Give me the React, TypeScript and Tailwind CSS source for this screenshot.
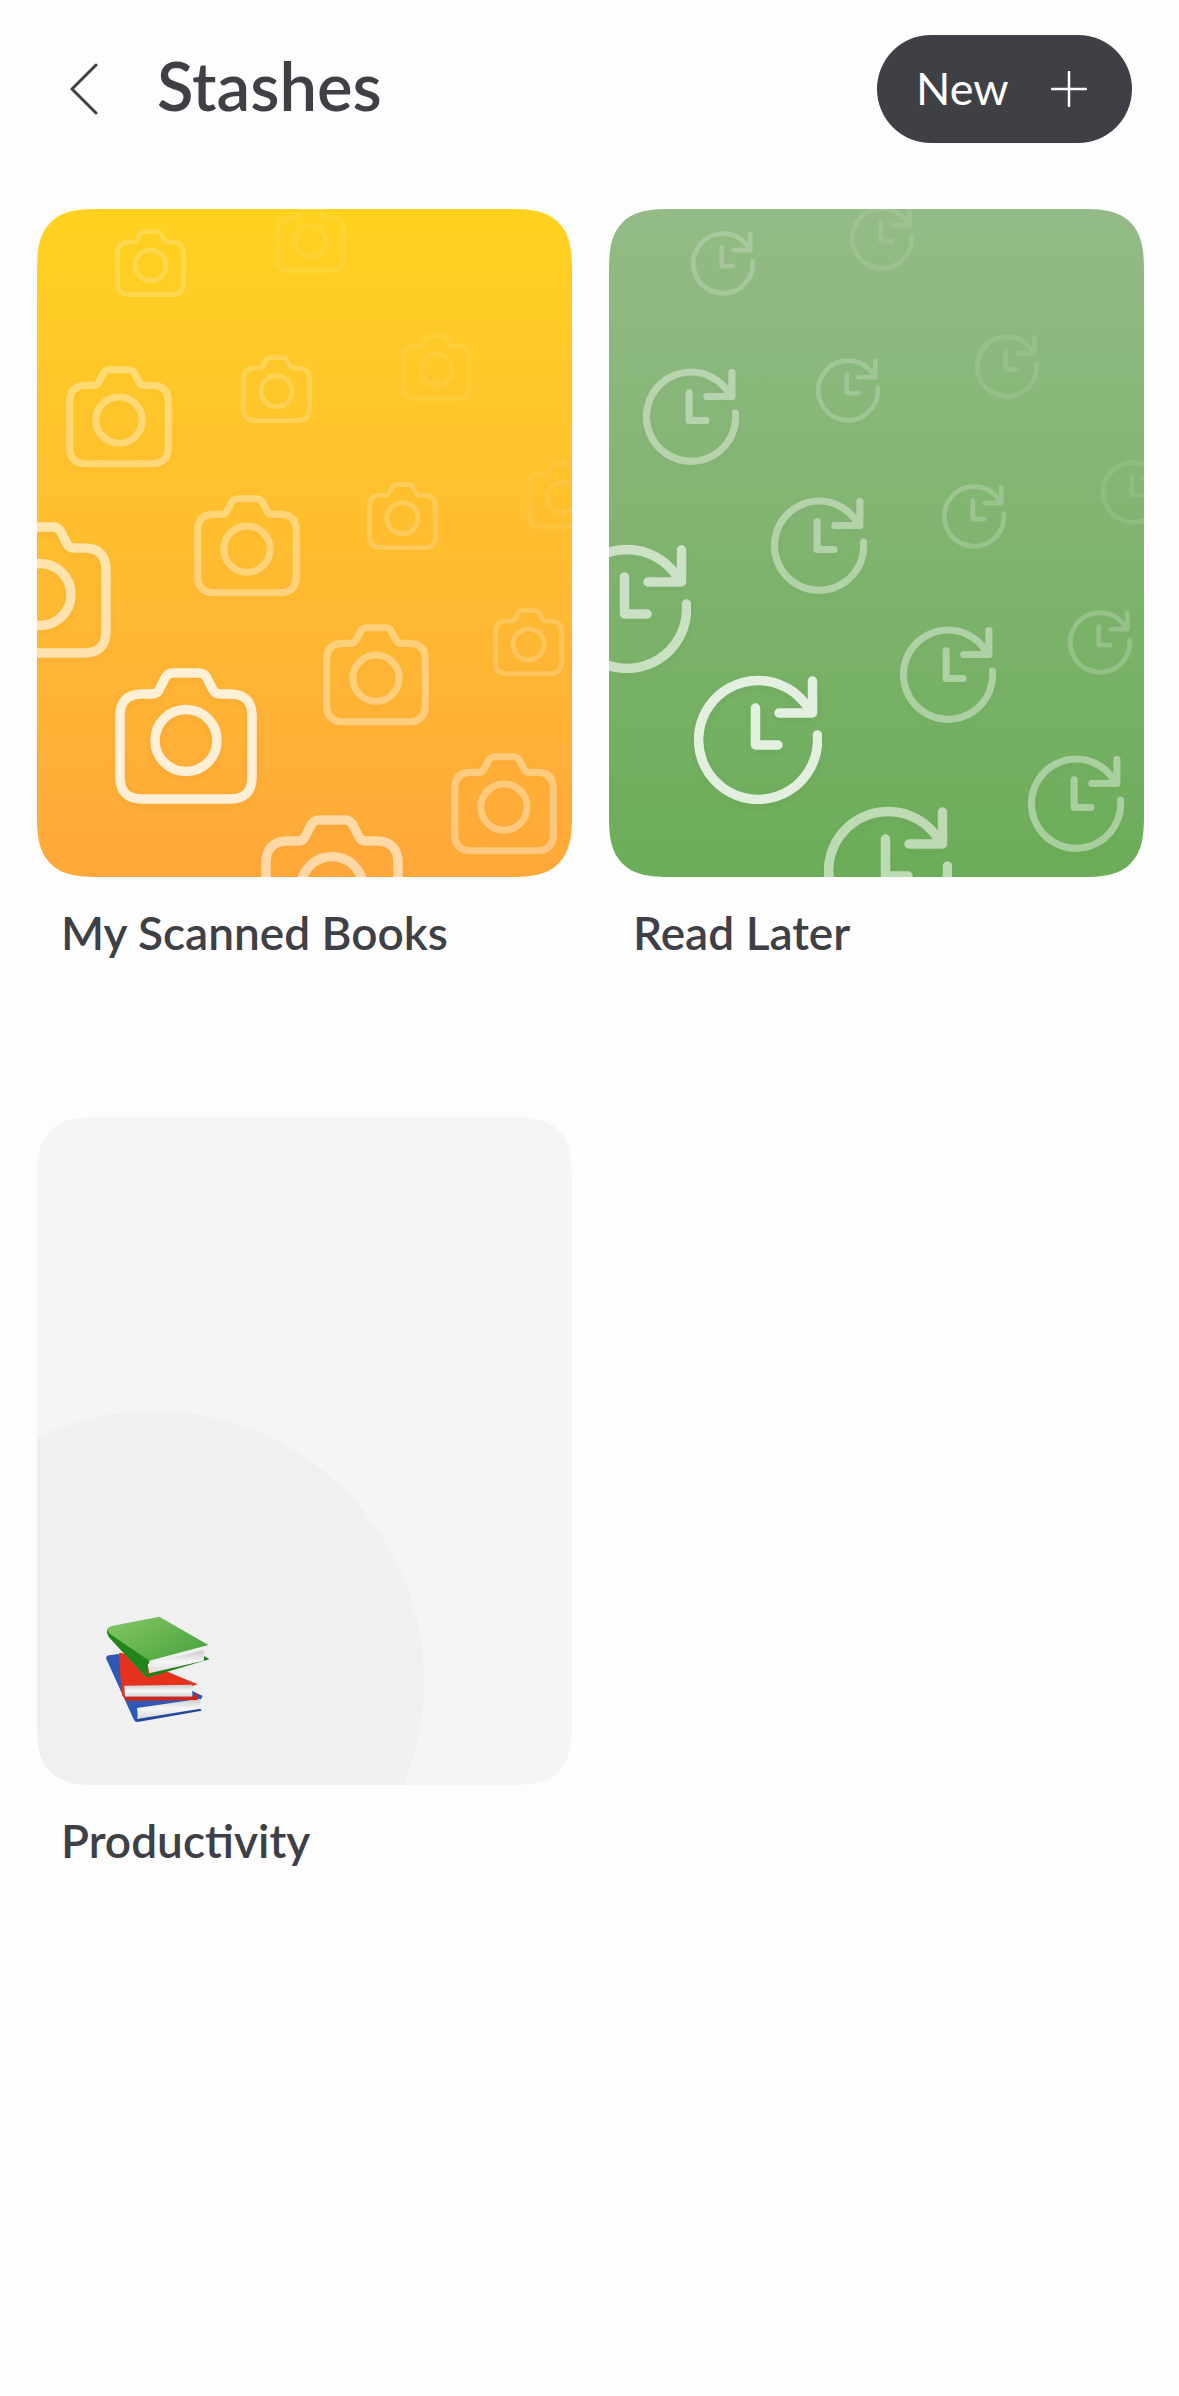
import React from "react";

type Spot = { x: number; y: number; o: number };

const cameraSmall = 71;
const cameraMedium = 106;
const cameraLarge = 142;

const cameraSpots: (Spot & { w: number })[] = [
  { x: 78, y: 459, w: cameraLarge, o: 0.8 },
  { x: -68, y: 313, w: cameraLarge, o: 0.6 },
  { x: 224, y: 606, w: cameraLarge, o: 0.55 },
  { x: 29, y: 157, w: cameraMedium, o: 0.35 },
  { x: 157, y: 286, w: cameraMedium, o: 0.35 },
  { x: 286, y: 415, w: cameraMedium, o: 0.35 },
  { x: 414, y: 544, w: cameraMedium, o: 0.35 },
  { x: 78, y: 20, w: cameraSmall, o: 0.2 },
  { x: 204, y: 146, w: cameraSmall, o: 0.2 },
  { x: 330, y: 273, w: cameraSmall, o: 0.2 },
  { x: 456, y: 399, w: cameraSmall, o: 0.2 },
  { x: 238, y: -4, w: cameraSmall, o: 0.08 },
  { x: 364, y: 124, w: cameraSmall, o: 0.08 },
  { x: 490, y: 252, w: cameraSmall, o: 0.08 },
];

const clockSpots: (Spot & { w: number })[] = [
  { x: 85, y: 466, w: 128, o: 0.8 },
  { x: -46, y: 335, w: 128, o: 0.6 },
  { x: 215, y: 597, w: 128, o: 0.55 },
  { x: 34, y: 159, w: 96, o: 0.4 },
  { x: 162, y: 288, w: 96, o: 0.4 },
  { x: 291, y: 417, w: 96, o: 0.4 },
  { x: 419, y: 546, w: 96, o: 0.4 },
  { x: 82, y: 22, w: 64, o: 0.2 },
  { x: 207, y: 149, w: 64, o: 0.2 },
  { x: 333, y: 275, w: 64, o: 0.2 },
  { x: 459, y: 401, w: 64, o: 0.2 },
  { x: 241, y: -3, w: 64, o: 0.1 },
  { x: 366, y: 125, w: 64, o: 0.1 },
  { x: 492, y: 251, w: 64, o: 0.1 },
];

function CameraIcon({ x, y, w, o }: Spot & { w: number }) {
  return (
    <svg
      viewBox="0 0 142 136"
      width={w}
      height={(w * 136) / 142}
      fill="none"
      stroke="#fff"
      strokeWidth="9.5"
      className="absolute drop-shadow-[0_3px_5px_rgba(0,0,0,0.05)]"
      style={{ left: x, top: y, opacity: o }}
    >
      <path d="M27 26H37Q42 26 44 22L49 12Q52 5 58 5H84Q90 5 93 12L98 22Q100 26 105 26H115Q137 26 137 48V109Q137 131 115 131H27Q5 131 5 109V48Q5 26 27 26Z" />
      <circle cx="71" cy="72.5" r="31" />
    </svg>
  );
}

function ClockIcon({ x, y, w, o }: Spot & { w: number }) {
  return (
    <svg
      viewBox="0 0 128 129"
      width={w}
      height={(w * 129) / 128}
      fill="none"
      stroke="#fff"
      strokeWidth="9.5"
      strokeLinecap="round"
      strokeLinejoin="round"
      className="absolute drop-shadow-[0_3px_5px_rgba(0,0,0,0.05)]"
      style={{ left: x, top: y, opacity: o }}
    >
      <path d="M123.4 60A59.5 59.5 0 1 1 113 31L118 37" />
      <path d="M118.5 6V38H85" />
      <path d="M61.5 33V70H84" />
    </svg>
  );
}

function BooksEmoji() {
  return (
    <svg viewBox="0 0 450 450" className="absolute left-[44px] top-[473px] w-[150px] h-[150px]">
      <defs>
        <linearGradient id="greenCover" x1="0" y1="0" x2="1" y2="1">
          <stop offset="0" stopColor="#86c766" />
          <stop offset="1" stopColor="#3a9a32" />
        </linearGradient>
        <linearGradient id="pages" x1="0" y1="0" x2="0" y2="1">
          <stop offset="0" stopColor="#c9c9c9" />
          <stop offset="0.5" stopColor="#f6f6f6" />
          <stop offset="1" stopColor="#d8d8d8" />
        </linearGradient>
      </defs>
      {/* blue book */}
      <path d="M75 205Q76 195 90 195L112 192L365 318L360 328L172 356L168 396Q162 398 158 388Z" fill="#2f58b4" />
      <path d="M168 354L358 326V356L172 386Z" fill="url(#pages)" />
      <path d="M165 388L172 386L358 356L362 362L170 396Z" fill="#24489e" />
      {/* red book */}
      <path d="M114 190L122 188L350 283L335 288L132 290L130 322L124 318Q116 250 114 190Z" fill="#e5321d" />
      <path d="M130 287L334 284V320L132 320Z" fill="url(#pages)" />
      <path d="M124 316L132 320L334 320L348 310L350 330L136 332Z" fill="#d32516" />
      {/* green book */}
      <path d="M78 118Q80 112 92 108L235 80L382 165L205 212L198 262Q192 262 186 252L84 142Q76 130 78 118Z" fill="url(#greenCover)" />
      <path d="M78 118Q80 126 90 134L205 212L198 262L186 252L84 142Q76 130 78 118Z" fill="#22841c" />
      <path d="M200 222L368 180V214L205 252Z" fill="url(#pages)" />
      <path d="M196 256L205 250L368 212L370 198L385 208L198 263Z" fill="#22801a" />
    </svg>
  );
}

type StashCardProps = {
  label: string;
  cardClass: string;
  children: React.ReactNode;
};

function StashCard(props: StashCardProps) {
  return (
    <div className="flex flex-col h-[908px]">
      <div className={`relative h-[668px] rounded-[62px] [corner-shape:superellipse(1.5)] overflow-hidden ${props.cardClass}`}>{props.children}</div>
      <p className="mt-[28px] pl-[24px] text-[46px] leading-[56px] font-semibold text-[#3e4045]">{props.label}</p>
    </div>
  );
}

export default function App() {
  return (
    <div className="w-[1179px] h-[2396px] bg-[#fdfdfd] overflow-hidden font-['Lato',sans-serif]">
      <header className="flex flex-row items-center justify-between h-[108px] mt-[35px] pl-[70px] pr-[47px]">
        <div className="flex flex-row items-center">
          <svg viewBox="0 0 28 52" className="w-[28px] h-[52px] mr-[59px]" fill="none" stroke="#3e4045" strokeWidth="3" strokeLinecap="round" strokeLinejoin="round">
            <path d="M26 2L2 26L26 50" />
          </svg>
          <h1 className="text-[67px] leading-[80px] -mt-[9px] font-semibold text-[#3e4045]">Stashes</h1>
        </div>
        <button className="flex flex-row items-center w-[255px] h-[108px] pl-[39px] rounded-full bg-[#3e4045] text-white">
          <span className="text-[45px] leading-[56px] -mt-[2px]">New</span>
          <svg viewBox="0 0 36 36" className="w-[36px] h-[36px] ml-[42px]" fill="none" stroke="#fff" strokeWidth="2.5" strokeLinecap="round">
            <path d="M18 1V35M1 18H35" />
          </svg>
        </button>
      </header>

      <main className="grid grid-cols-[535px_535px] gap-x-[37px] pl-[37px] mt-[66px]">
        <StashCard label="My Scanned Books" cardClass="bg-gradient-to-b from-[#ffd21f] to-[#ffa83a]">
          {cameraSpots.map((s, i) => (
            <CameraIcon key={i} {...s} />
          ))}
        </StashCard>
        <StashCard label="Read Later" cardClass="bg-gradient-to-b from-[#94bb86] to-[#6bad58]">
          {clockSpots.map((s, i) => (
            <ClockIcon key={i} {...s} />
          ))}
        </StashCard>
        <StashCard label="Productivity" cardClass="bg-[#f5f5f5]">
          <div className="absolute left-[-153px] top-[294px] w-[540px] h-[540px] rounded-full bg-[#f0f0f1]" />
          <BooksEmoji />
        </StashCard>
      </main>
    </div>
  );
}
